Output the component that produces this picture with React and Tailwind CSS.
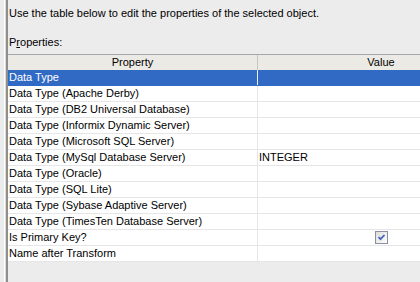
const rows = [
  { name: "Data Type", value: "", selected: true },
  { name: "Data Type (Apache Derby)", value: "" },
  { name: "Data Type (DB2 Universal Database)", value: "" },
  { name: "Data Type (Informix Dynamic Server)", value: "" },
  { name: "Data Type (Microsoft SQL Server)", value: "" },
  { name: "Data Type (MySql Database Server)", value: "INTEGER" },
  { name: "Data Type (Oracle)", value: "" },
  { name: "Data Type (SQL Lite)", value: "" },
  { name: "Data Type (Sybase Adaptive Server)", value: "" },
  { name: "Data Type (TimesTen Database Server)", value: "" },
  { name: "Is Primary Key?", value: "", check: true },
  { name: "Name after Transform", value: "" },
];

function CheckBox() {
  return (
    <svg width="13" height="13" viewBox="0 0 13 13">
      <defs>
        <linearGradient id="cb" x1="0" y1="0" x2="1" y2="1">
          <stop offset="0" stopColor="#dcdcd7" />
          <stop offset="1" stopColor="#ffffff" />
        </linearGradient>
      </defs>
      <rect x="0.5" y="0.5" width="12" height="12" fill="url(#cb)" stroke="#8a8fa3" />
      <path d="M3.5 6 L5.5 8.2 L9.5 4" fill="none" stroke="#4763b5" strokeWidth="1.8" />
    </svg>
  );
}

function App() {
  return (
    <div
      className="flex h-[282px] w-[420px] overflow-hidden bg-[#ececec] text-[11px] text-black"
      style={{ fontFamily: '"Liberation Sans", Arial, sans-serif' }}
    >
      <div className="ml-1 flex w-[4px] shrink-0">
        <div className="w-px bg-white" />
        <div className="w-px bg-[#dcdcdc]" />
        <div className="w-[2px] bg-[#8e8e8e]" />
      </div>
      <div className="flex min-w-0 flex-1 flex-col">
        <div className="h-[28px] pl-[1px] pt-[6px] leading-[14px]">
          Use the table below to edit the properties of the selected object.
        </div>
        <div className="h-[26px] pl-[1px] pt-[7px] leading-[14px]">
          P<span className="underline">r</span>operties:
        </div>
        <div className="w-[496px] bg-white">
          <div className="flex h-[16px] border-t border-[#a7a6aa] bg-[#ebeae5] leading-[15px]">
            <div className="w-[250px] border-r border-[#c5c5c5] text-center">Property</div>
            <div className="w-[246px] text-center">Value</div>
          </div>
          {rows.map((r) => (
            <div
              key={r.name}
              className={
                r.selected
                  ? "flex h-[16px] border-b border-[#316ac5] bg-[#316ac5] leading-[15px] text-white"
                  : "flex h-[16px] border-b border-[#e6e6e6] leading-[15px]"
              }
            >
              <div
                className={
                  r.selected
                    ? "w-[250px] border-r border-[#e8eef8] pl-[1px]"
                    : "w-[250px] border-r border-[#e6e6e6] pl-[1px]"
                }
              >
                {r.name}
              </div>
              <div className="flex w-[246px] items-center justify-center pl-[1px]">
                {r.check ? (
                  <CheckBox />
                ) : (
                  <span className="w-full text-left">{r.value}</span>
                )}
              </div>
            </div>
          ))}
        </div>
      </div>
    </div>
  );
}

export default App;
